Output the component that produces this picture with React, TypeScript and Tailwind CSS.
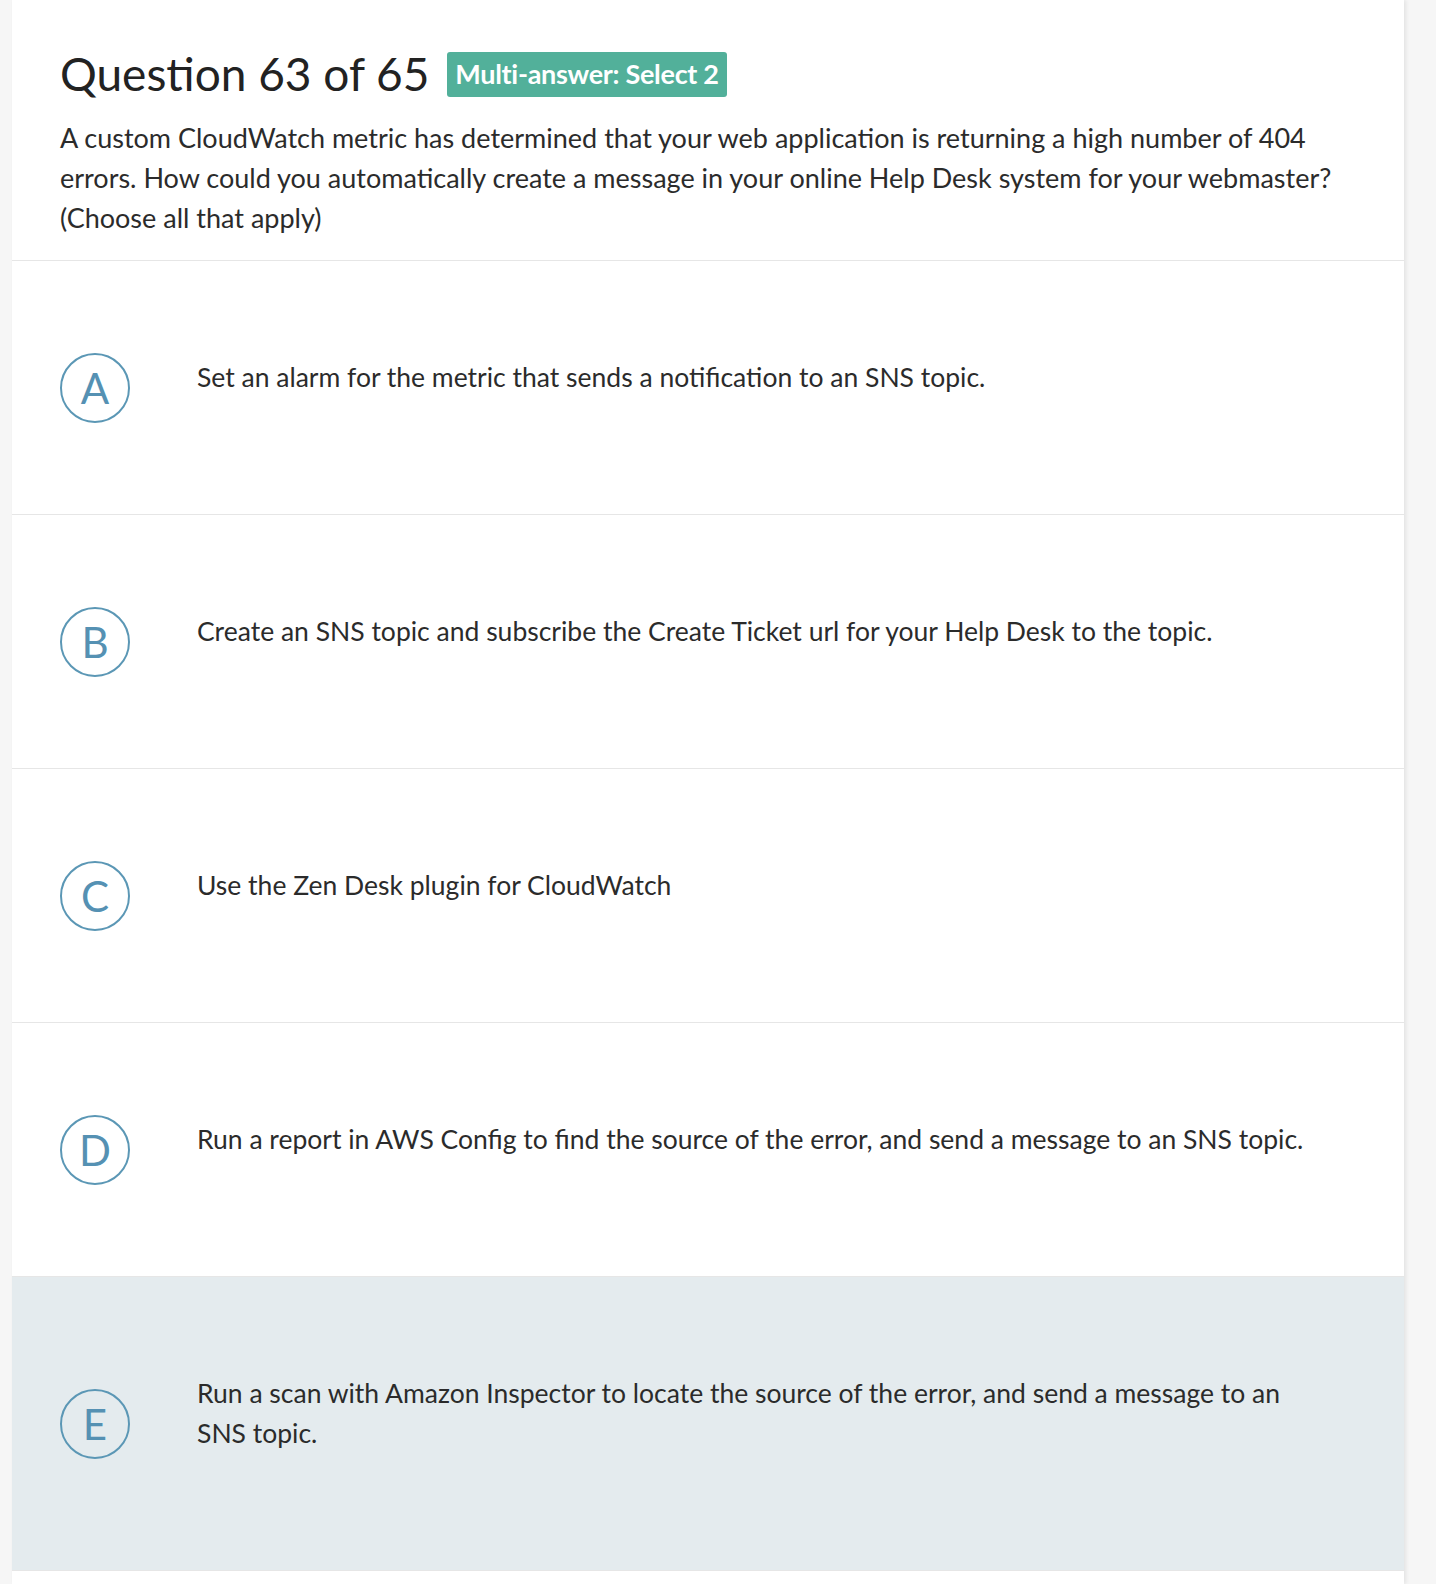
import React from "react";

const options = [
  { letter: "A", text: "Set an alarm for the metric that sends a notification to an SNS topic." },
  { letter: "B", text: "Create an SNS topic and subscribe the Create Ticket url for your Help Desk to the topic." },
  { letter: "C", text: "Use the Zen Desk plugin for CloudWatch" },
  { letter: "D", text: "Run a report in AWS Config to find the source of the error, and send a message to an SNS topic." },
  { letter: "E", text: "Run a scan with Amazon Inspector to locate the source of the error, and send a message to an SNS topic.", selected: true },
];

export default function App() {
  return (
    <div className="min-h-[1584px] bg-[#f6f6f6] font-['Lato','Noto_Sans',sans-serif]">
      <div className="ml-[12px] w-[1392px] min-h-[1584px] bg-white shadow-[2px_0_4px_rgba(0,0,0,0.08)]">
        <div className="border-b border-[#e6e6e6] px-[48px] pt-[46px] pb-[22px]">
          <div className="flex items-center gap-[18px]">
            <h1 className="text-[46px] leading-[56px] font-normal text-[#222]">Question 63 of 65</h1>
            <span className="rounded-[3px] bg-[#52b09a] px-[8px] h-[45px] flex items-center text-[27px] font-bold text-white tracking-[-0.3px]">
              Multi-answer: Select 2
            </span>
          </div>
          <p className="mt-[16px] text-[27px] leading-[40px] text-[#2b2b2b] max-w-[1292px]">
            A custom CloudWatch metric has determined that your web application is returning a high number of 404 errors. How could you automatically create a message in your online Help Desk system for your webmaster? (Choose all that apply)
          </p>
        </div>
        {options.map((o) => (
          <div
            key={o.letter}
            className={`flex items-center border-b border-[#e6e6e6] px-[48px] pt-[96px] pb-[95px] ${o.selected ? "bg-[#e4ebee]" : ""}`}
          >
            <div className="-my-[10px] w-[70px] h-[70px] shrink-0 rounded-full border-2 border-[#5b97b5] flex items-center justify-center text-[42px] leading-none text-[#5591b3]">
              {o.letter}
            </div>
            <div className="ml-[67px] pb-[22px] text-[26.5px] leading-[40px] text-[#2b2b2b] max-w-[1130px]">
              {o.text}
            </div>
          </div>
        ))}
      </div>
    </div>
  );
}
